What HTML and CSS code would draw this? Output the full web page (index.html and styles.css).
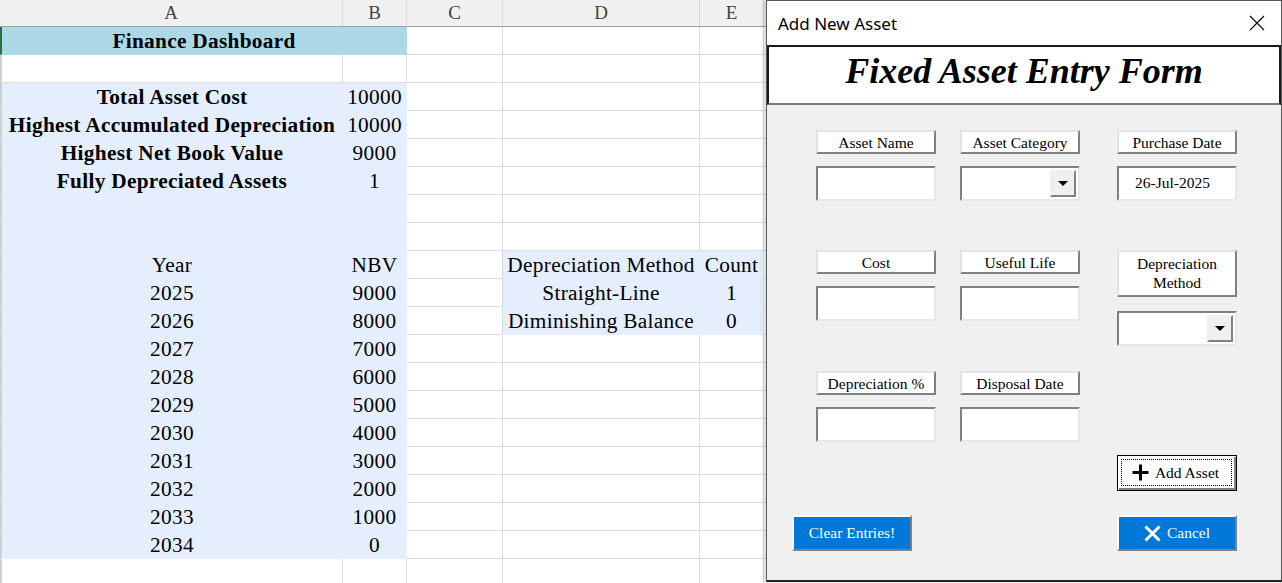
FILE: index.html
```html
<!DOCTYPE html>
<html>
<head>
<meta charset="utf-8">
<link rel="stylesheet" href="styles.css">
</head>
<body>
<div class="sheet">
  <div class="colhead">
    <div class="ch">A</div><div class="ch">B</div><div class="ch">C</div><div class="ch">D</div><div class="ch">E</div><div class="ch"></div>
  </div>
  <div class="row"><div class="c first sel title span2">Finance Dashboard</div><div class="c"></div><div class="c"></div><div class="c"></div><div class="c"></div></div>
  <div class="row"><div class="c first"></div><div class="c"></div><div class="c"></div><div class="c"></div><div class="c"></div><div class="c"></div></div>
  <div class="row"><div class="c first bl bold">Total Asset Cost</div><div class="c bl">10000</div><div class="c"></div><div class="c"></div><div class="c"></div><div class="c"></div></div>
  <div class="row"><div class="c first bl bold">Highest Accumulated Depreciation</div><div class="c bl">10000</div><div class="c"></div><div class="c"></div><div class="c"></div><div class="c"></div></div>
  <div class="row"><div class="c first bl bold">Highest Net Book Value</div><div class="c bl">9000</div><div class="c"></div><div class="c"></div><div class="c"></div><div class="c"></div></div>
  <div class="row"><div class="c first bl bold">Fully Depreciated Assets</div><div class="c bl">1</div><div class="c"></div><div class="c"></div><div class="c"></div><div class="c"></div></div>
  <div class="row"><div class="c first bl"></div><div class="c bl"></div><div class="c"></div><div class="c"></div><div class="c"></div><div class="c"></div></div>
  <div class="row"><div class="c first bl"></div><div class="c bl"></div><div class="c"></div><div class="c"></div><div class="c"></div><div class="c"></div></div>
  <div class="row"><div class="c first bl">Year</div><div class="c bl">NBV</div><div class="c"></div><div class="c bl">Depreciation Method</div><div class="c bl">Count</div><div class="c"></div></div>
  <div class="row"><div class="c first bl">2025</div><div class="c bl">9000</div><div class="c"></div><div class="c bl">Straight-Line</div><div class="c bl">1</div><div class="c"></div></div>
  <div class="row"><div class="c first bl">2026</div><div class="c bl">8000</div><div class="c"></div><div class="c bl">Diminishing Balance</div><div class="c bl">0</div><div class="c"></div></div>
  <div class="row"><div class="c first bl">2027</div><div class="c bl">7000</div><div class="c"></div><div class="c"></div><div class="c"></div><div class="c"></div></div>
  <div class="row"><div class="c first bl">2028</div><div class="c bl">6000</div><div class="c"></div><div class="c"></div><div class="c"></div><div class="c"></div></div>
  <div class="row"><div class="c first bl">2029</div><div class="c bl">5000</div><div class="c"></div><div class="c"></div><div class="c"></div><div class="c"></div></div>
  <div class="row"><div class="c first bl">2030</div><div class="c bl">4000</div><div class="c"></div><div class="c"></div><div class="c"></div><div class="c"></div></div>
  <div class="row"><div class="c first bl">2031</div><div class="c bl">3000</div><div class="c"></div><div class="c"></div><div class="c"></div><div class="c"></div></div>
  <div class="row"><div class="c first bl">2032</div><div class="c bl">2000</div><div class="c"></div><div class="c"></div><div class="c"></div><div class="c"></div></div>
  <div class="row"><div class="c first bl">2033</div><div class="c bl">1000</div><div class="c"></div><div class="c"></div><div class="c"></div><div class="c"></div></div>
  <div class="row"><div class="c first bl">2034</div><div class="c bl">0</div><div class="c"></div><div class="c"></div><div class="c"></div><div class="c"></div></div>
  <div class="row"><div class="c first"></div><div class="c"></div><div class="c"></div><div class="c"></div><div class="c"></div><div class="c"></div></div>
</div>

<div class="dialog">
  <div class="titlebar">
    <span class="wintitle">Add New Asset</span>
    <svg class="close" width="16" height="16" viewBox="0 0 16 16"><path d="M1 1 L15 15 M15 1 L1 15" stroke="#000" stroke-width="1.1" fill="none"/></svg>
  </div>
  <div class="formtitle">Fixed Asset Entry Form</div>
  <div class="formbody">
    <div class="fields">
      <div class="field"><div class="lbl">Asset Name</div><div class="inp"></div></div>
      <div class="field"><div class="lbl">Asset Category</div><div class="inp combo"><span class="ddbtn"><span class="arrow"></span></span></div></div>
      <div class="field"><div class="lbl">Purchase Date</div><div class="inp val">26-Jul-2025</div></div>

      <div class="field"><div class="lbl">Cost</div><div class="inp"></div></div>
      <div class="field"><div class="lbl">Useful Life</div><div class="inp"></div></div>
      <div class="field tall"><div class="lbl two">Depreciation<br>Method</div><div class="inp combo"><span class="ddbtn"><span class="arrow"></span></span></div></div>

      <div class="field"><div class="lbl">Depreciation %</div><div class="inp"></div></div>
      <div class="field"><div class="lbl">Disposal Date</div><div class="inp"></div></div>
      <div class="field"><button class="btn add"><span class="focus"><svg width="17" height="17" viewBox="0 0 17 17"><path d="M8.5 0.5 V16.5 M0.5 8.5 H16.5" stroke="#000" stroke-width="3" fill="none"/></svg>Add Asset</span></button></div>
    </div>
    <div class="footer">
      <button class="btn blue">Clear Entries!</button>
      <button class="btn blue cancel"><svg width="17" height="17" viewBox="0 0 17 17"><path d="M1.5 1.5 L15.5 15.5 M15.5 1.5 L1.5 15.5" stroke="#fff" stroke-width="3" fill="none"/></svg>Cancel</button>
    </div>
  </div>
</div>
</body>
</html>
```

FILE: styles.css
```css
* { box-sizing: border-box; }
html, body { margin: 0; padding: 0; }
body {
  width: 1282px;
  height: 583px;
  overflow: hidden;
  position: relative;
  background: #fff;
  font-family: "Liberation Serif", "Times New Roman", serif;
}

.sheet { width: 1282px; }

.colhead, .row {
  display: grid;
  grid-template-columns: 343px 64px 96px 197px 64px 1fr;
}

.colhead {
  height: 27px;
  background: #f0f0f0;
  border-bottom: 1px solid #a0a0a0;
}
.ch {
  border-right: 1px solid #d6d6d6;
  color: #444;
  font-size: 19px;
  text-align: center;
  line-height: 26px;
}

.row { height: 28px; }
.c {
  border-right: 1px solid #dcdcdc;
  border-bottom: 1px solid #dcdcdc;
  font-size: 21.3px;
  letter-spacing: 0.3px;
  color: #000;
  text-align: center;
  line-height: 24px;
  padding-top: 2px;
  white-space: nowrap;
}
.c.first { border-left: 2px solid #d0d0d0; }
.c.sel { border-left-color: #217346; }
.c.span2 { grid-column: span 2; }
.c.title {
  background: #add8e6;
  border-color: #add8e6;
  border-left-color: #217346;
  font-weight: bold;
}
.c.bl {
  background: #e5eefc;
  border-right-color: #e5eefc;
  border-bottom-color: #e5eefc;
}
.c.bold { font-weight: bold; }

/* dialog */
.dialog {
  position: absolute;
  left: 766px;
  top: 0;
  width: 516px;
  height: 582px;
  background: #f0f0f0;
  border: 1px solid #5a5a5a;
  border-bottom: 2px solid #222;
  box-shadow: -2px 0 4px rgba(0,0,0,0.18);
}
.titlebar {
  height: 44px;
  background: #fff;
  display: flex;
  align-items: center;
  justify-content: space-between;
  padding: 0 16px 0 11px;
}
.wintitle {
  font-family: "Noto Sans", "Open Sans", sans-serif;
  font-size: 17px;
  color: #000;
  padding-top: 1px;
}
.close { display: block; }

.formtitle {
  height: 60px;
  background: #fff;
  border-top: 2px solid #1a1a1a;
  border-left: 2px solid #1a1a1a;
  border-right: 2px solid #1a1a1a;
  border-bottom: 2px solid #7a7a7a;
  text-align: center;
  font-weight: bold;
  font-style: italic;
  font-size: 36px;
  line-height: 48px;
  padding-top: 0;
}

.formbody { padding-top: 25px; }
.fields {
  display: grid;
  grid-template-columns: 144px 157px 120px;
  grid-template-rows: 120px 121px 120px;
  padding-left: 49px;
}
.field {
  width: 120px;
  display: flex;
  flex-direction: column;
  gap: 12px;
}
.field.tall { gap: 14px; }

.lbl {
  height: 24px;
  background: #fff;
  border: 2px solid;
  border-color: #e3e3e3 #808080 #808080 #e3e3e3;
  font-size: 15.5px;
  line-height: 19px;
  padding-top: 1px;
  text-align: center;
  color: #000;
}
.lbl.two { height: 47px; line-height: 19px; padding-top: 2px; }

.inp {
  height: 35px;
  background: #fff;
  border: 2px solid;
  border-color: #808080 #e8e8e8 #e8e8e8 #808080;
  position: relative;
}
.inp.val {
  font-size: 15.5px;
  line-height: 30px;
  padding-left: 16px;
}
.inp.combo { display: flex; justify-content: flex-end; padding: 2px; }
.ddbtn {
  width: 26px;
  height: 100%;
  background: #f0f0f0;
  border: 2px solid;
  border-color: #f0f0f0 #808080 #808080 #f0f0f0;
  display: flex;
  align-items: center;
  justify-content: center;
}
.arrow {
  width: 0; height: 0;
  border-left: 5px solid transparent;
  border-right: 5px solid transparent;
  border-top: 5px solid #000;
}

.btn {
  width: 120px;
  height: 36px;
  font-family: "Liberation Serif", "Times New Roman", serif;
  font-size: 15.5px;
  padding: 0;
  display: flex;
  align-items: center;
  justify-content: center;
  gap: 6px;
  cursor: default;
}
.btn.add {
  margin-top: 84px;
  background: #fff;
  border: 1px solid #000;
  box-shadow: inset 1px 1px 0 #fff, inset -2px -2px 0 #808080;
  padding: 3px 4px 4px 3px;
  color: #000;
}
.focus {
  flex: 1;
  height: 100%;
  border: 1px dotted #000;
  display: flex;
  align-items: center;
  justify-content: center;
  gap: 6px;
  padding-right: 2px;
}
.focus svg, .cancel svg { display: block; }

.footer {
  display: flex;
  gap: 205px;
  padding-left: 25px;
  margin-top: 24px;
}
.btn.blue {
  background: #0078d7;
  color: #fff;
  border: 2px solid;
  border-color: #fff #808080 #808080 #fff;
  height: 36px;
}
```
